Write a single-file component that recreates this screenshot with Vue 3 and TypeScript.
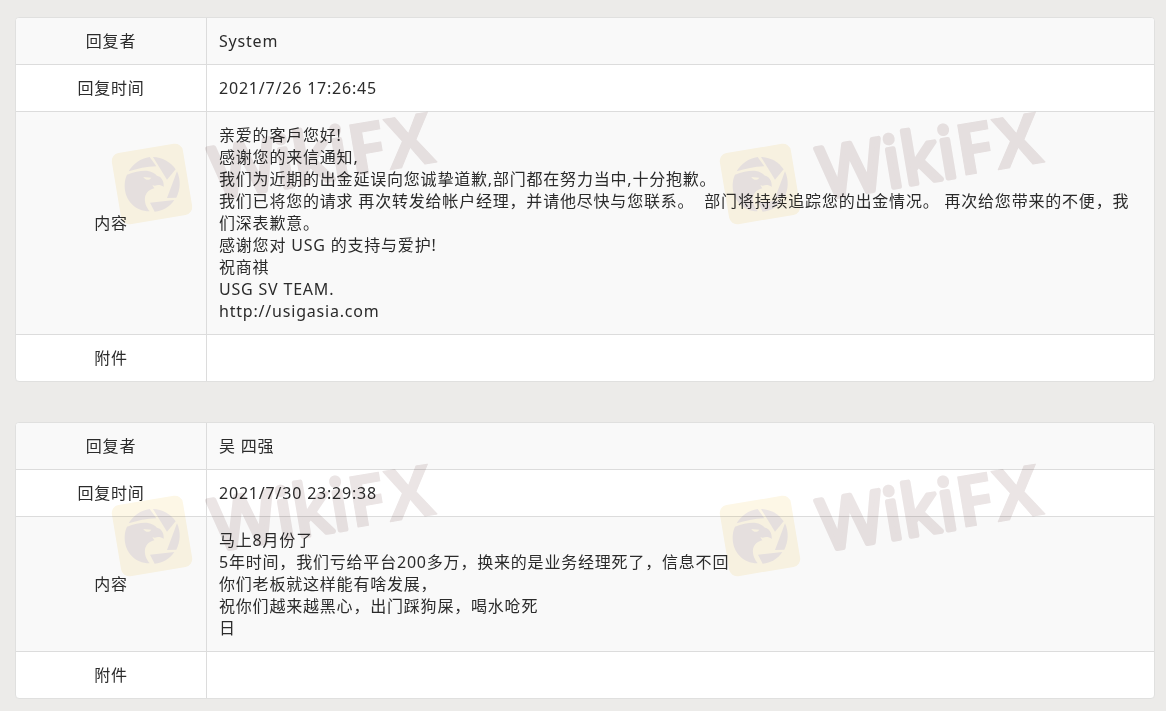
<script setup lang="ts">
interface Reply {
  id: number
  author: string
  time: string
  lines: string[]
}

const replies: Reply[] = [
  {
    id: 1,
    author: 'System',
    time: '2021/7/26 17:26:45',
    lines: [
      '亲爱的客戶您好!',
      '感谢您的来信通知,',
      '我们为近期的出金延误向您诚挚道歉,部门都在努力当中,十分抱歉。',
      '我们已将您的请求 再次转发给帐户经理，并请他尽快与您联系。\u00a0 部门将持续追踪您的出金情况。 再次给您带来的不便，我们深表歉意。',
      '感谢您对 USG 的支持与爱护!',
      '祝商祺',
      'USG SV TEAM.',
      'http://usigasia.com',
    ],
  },
  {
    id: 2,
    author: '吴 四强',
    time: '2021/7/30 23:29:38',
    lines: [
      '马上8月份了',
      '5年时间，我们亏给平台200多万，换来的是业务经理死了，信息不回',
      '你们老板就这样能有啥发展，',
      '祝你们越来越黑心，出门踩狗屎，喝水呛死',
      '日',
    ],
  },
]
</script>

<template>
  <main class="page">
    <table v-for="reply in replies" :key="reply.id" class="reply">
      <tbody>
        <tr>
          <th scope="row">回复者</th>
          <td>{{ reply.author }}</td>
        </tr>
        <tr>
          <th scope="row">回复时间</th>
          <td>{{ reply.time }}</td>
        </tr>
        <tr>
          <th scope="row">内容</th>
          <td>
            <div v-for="(line, i) in reply.lines" :key="i">{{ line }}</div>
          </td>
        </tr>
        <tr>
          <th scope="row">附件</th>
          <td></td>
        </tr>
      </tbody>
    </table>

    <div class="watermarks" aria-hidden="true">
      <svg v-for="n in 4" :key="n" class="mark" viewBox="0 0 608 352">
        <rect class="tile" x="-36" y="-36" width="72" height="72" rx="8" transform="translate(152 184) rotate(-9.5)" />
        <g class="ink" transform="translate(122 154) scale(0.3333)">
          <path d="M20 52 C34 28 56 13 83 9 L103 37 C74 38 46 44 20 52Z" />
          <path d="M93 9 C121 10 145 23 161 46 L135 77Z" />
          <path d="M165 52 C177 78 175 107 163 131 L135 132Z" />
          <path d="M84 146 L157 138 C143 159 122 171 98 173Z" />
          <path fill-rule="evenodd" d="M15 62 C38 53 62 49 78 51 C90 53 98 58 105 65 C116 67 127 79 125 99 C118 93 108 92 99 95 L91 94 L97 103 C83 106 72 115 69 130 C67 146 73 160 83 172 C38 172 8 137 8 96 C8 83 10 72 15 62Z M64 69 C70 79 81 81 88 71Z" />
        </g>
        <text class="word" transform="translate(215 199) rotate(-9.5)">Wiki<tspan class="caps">FX</tspan></text>
      </svg>
    </div>
  </main>
</template>

<style>
body {
  margin: 0;
  background: #ecebe9;
}
</style>

<style scoped>
.page {
  position: relative;
  display: flex;
  flex-direction: column;
  gap: 40px;
  padding: 17px 11px 12px 15px;
  overflow: hidden;
  color: #2b2b2b;
  font-family: "Noto Sans", "Noto Sans CJK SC", sans-serif;
  font-size: 16px;
  font-weight: 400;
  line-height: 22px;
  letter-spacing: 0.05em;
}

.reply {
  width: 100%;
  table-layout: fixed;
  border: 1px solid #e0e0df;
  border-radius: 4px;
  border-spacing: 0;
  background: #fff;
  overflow: hidden;
}

.reply tr:nth-child(odd) {
  background: #f9f9f9;
}

.reply th,
.reply td {
  box-sizing: border-box;
  height: 47px;
  padding: 12px;
  border-bottom: 1px solid #dcdcdc;
  vertical-align: middle;
}

.reply tr:last-child > * {
  height: 46px;
  border-bottom: 0;
}

.reply th {
  width: 191px;
  border-right: 1px solid #dcdcdc;
  font-weight: inherit;
  text-align: center;
}

.reply td {
  text-align: left;
}

.watermarks {
  position: absolute;
  inset: 0;
  display: grid;
  grid-template-columns: repeat(2, 608px);
  grid-auto-rows: 352px;
  overflow: hidden;
  pointer-events: none;
  mix-blend-mode: multiply;
}

.mark {
  width: 608px;
  height: 352px;
}

.tile {
  fill: #fdf7e6;
}

.ink {
  fill: #ebe5e4;
}

.word {
  fill: #ebe5e5;
  stroke: #ebe5e5;
  stroke-width: 5;
  stroke-linejoin: round;
  font-family: "Open Sans", sans-serif;
  font-size: 71px;
  font-weight: 400;
  letter-spacing: 0;
}

.caps {
  stroke-width: 1;
  font-weight: 700;
}
</style>
